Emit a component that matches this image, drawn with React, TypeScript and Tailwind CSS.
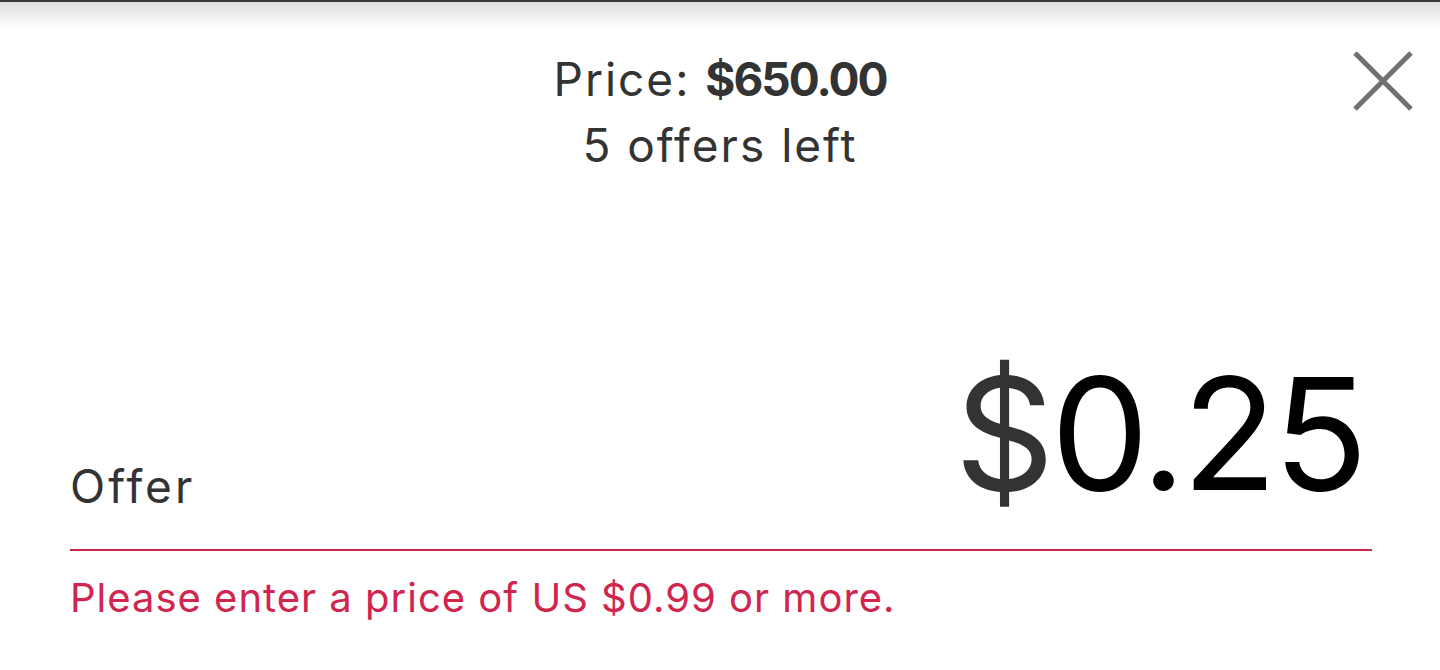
import React from 'react';

export default function App() {
  return (
    <div className="relative h-[670px] w-full overflow-hidden bg-white font-['Inter',sans-serif] text-[#333]">
      <div className="h-[2px] bg-[#3a3a3a]" />
      <div className="h-[26px] bg-gradient-to-b from-[#dedede] to-white" />

      <header className="mt-[18px] flex flex-col items-center text-[46px] leading-[66px] tracking-[2px]">
        <p>
          Price: <span className="font-bold tracking-[-2px]">$650.00</span>
        </p>
        <p>5 offers left</p>
      </header>

      <button className="absolute right-[26px] top-[50px] p-0" aria-label="Close">
        <svg width="62" height="62" viewBox="0 0 62 62" fill="none" stroke="#707070" strokeWidth="5">
          <path d="M3 3 L59 59 M59 3 L3 59" />
        </svg>
      </button>

      <section className="ml-[70px] mr-[68px] mt-[178px]">
        <div className="flex items-end justify-between border-b-2 border-[#c8264d] pb-[37px]">
          <label className="mb-[-9px] text-[46px] tracking-[3px]">Offer</label>
          <div className="mr-[8px] text-[156px] leading-none tracking-[-4px] text-black">
            <span className="text-[#333]">$</span>0.25
          </div>
        </div>
        <p className="mt-[17px] text-[40px] tracking-[1px] text-[#d0254f]">Please enter a price of US $0.99 or more.</p>
      </section>
    </div>
  );
}
